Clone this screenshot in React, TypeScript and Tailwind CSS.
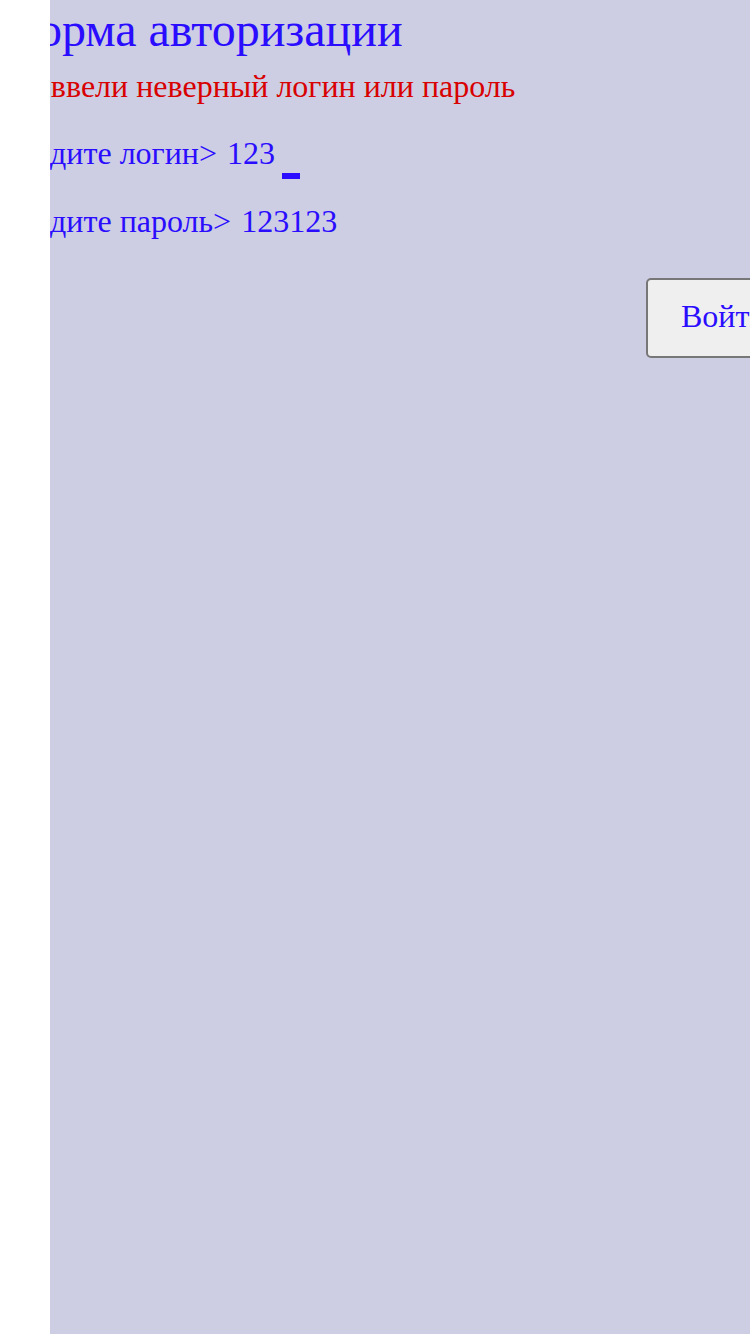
import React from "react";

export default function App() {
  return (
    <div className="flex min-h-[1334px] w-[750px] bg-white" style={{ fontFamily: '"Liberation Serif", "Times New Roman", serif' }}>
      <div className="w-[50px] shrink-0 bg-white" />
      <div className="flex-1 overflow-hidden bg-[#cdcde3]">
        <div className="-ml-[50px] w-[900px] flex flex-col">
          <h1 className="text-[48px] leading-[56px] text-[#2a0cff] mt-[2px]">Форма авторизации</h1>
          <p className="text-[32px] leading-[40px] text-[#d80000] mt-[8px]">Вы ввели неверный логин или пароль</p>
          <div className="flex items-end mt-[27px] text-[32px] leading-[40px] text-[#2a0cff]">
            <span>Введите логин&gt;</span>
            <span className="ml-[10px]">123</span>
            <span className="ml-[7px] -mb-[6px] inline-block w-[18px] h-[6px] bg-[#2a0cff]" />
          </div>
          <div className="flex mt-[28px] text-[32px] leading-[40px] text-[#2a0cff]">
            <span>Введите пароль&gt;</span>
            <span className="ml-[10px]">123123</span>
          </div>
          <div className="flex mt-[37px]">
            <button className="ml-[646px] h-[80px] px-[33px] pb-[4px] border-2 border-[#777777] rounded-[5px] bg-[#efefef] text-[32px] leading-[40px] text-[#2a0cff]">
              Войти
            </button>
          </div>
        </div>
      </div>
    </div>
  );
}
